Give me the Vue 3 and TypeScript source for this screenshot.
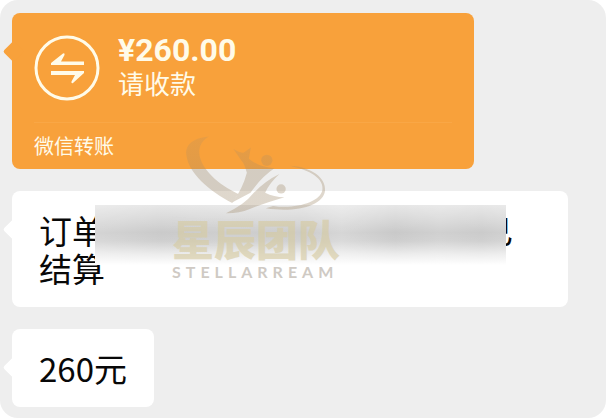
<script setup lang="ts">
const transfer = { amount: '¥260.00', status: '请收款', source: '微信转账' }
const brand = { name: '星辰团队', latin: 'STELLARREAM' }
</script>

<template>
  <main class="chat">
    <section class="bubble transfer">
      <div class="transfer-main">
        <svg class="transfer-icon" viewBox="0 0 66 66" aria-hidden="true">
          <circle cx="33" cy="33" r="31" fill="none" stroke="currentColor" stroke-width="3" />
          <path d="M17 30V28L29 18.500Q31 17.500 30.500 20L27 26.500H50V30Z" fill="currentColor" />
          <path d="M50 36V38L39 48Q37 49 37.500 46.500L41 40H17V36Z" fill="currentColor" />
        </svg>
        <div>
          <div class="amount">{{ transfer.amount }}</div>
          <div class="status">{{ transfer.status }}</div>
        </div>
      </div>
      <footer class="source">{{ transfer.source }}</footer>
    </section>

    <p class="bubble message order"><span class="line">订单<span class="hidden-text"></span>已<span class="mask"></span></span>结算</p>

    <p class="bubble message">260元</p>

    <div class="watermark">
      <svg class="brand-logo" viewBox="105 45 430 240" aria-hidden="true">
        <defs>
          <linearGradient id="logo-fade" gradientUnits="userSpaceOnUse" x1="0" y1="45" x2="0" y2="285">
            <stop offset="0" stop-color="#a08a6a" stop-opacity="0.18" />
            <stop offset="0.4" stop-color="#a08a6a" stop-opacity="0.26" />
            <stop offset="0.44" stop-color="#a08a6a" stop-opacity="0.34" />
            <stop offset="1" stop-color="#a08a6a" stop-opacity="0.34" />
          </linearGradient>
        </defs>
        <g fill="url(#logo-fade)">
          <path d="M178 49C133 52 105 72 109 104C114 158 178 214 247 249L265 222C205 194 151 146 148 99C147 76 158 59 178 49Z" />
          <path d="M250 86Q268 98 281 98L303 82L297 116Q328 142 374 145Q335 171 302 218L248 247Q278 207 291 158Q282 128 276 124Z" />
          <circle cx="351" cy="121" r="17" />
          <path d="M389 162Q360 188 346 218Q372 231 404 232Q346 249 300 267Q265 281 228 280Q284 254 307 224Q343 184 389 162Z" />
          <circle cx="394" cy="207" r="14" />
          <path d="M420 137C485 140 530 174 526 212C521 258 438 279 348 265L370 258C438 268 511 247 518 211C524 177 484 151 420 137Z" />
        </g>
      </svg>
      <div class="brand-name">{{ brand.name }}</div>
      <div class="brand-latin">{{ brand.latin }}</div>
    </div>
  </main>
</template>

<style>
body {
  margin: 0;
  background: #fff;
}
</style>

<style scoped>
.chat {
  position: relative;
  display: flex;
  flex-direction: column;
  align-items: flex-start;
  gap: 22px;
  box-sizing: border-box;
  min-height: 100vh;
  padding: 13px 12px 10px;
  overflow: hidden;
  border-radius: 18px;
  background: #eee;
  font-family: "Noto Sans CJK SC", sans-serif;
}

.bubble {
  position: relative;
  box-sizing: border-box;
  max-width: 100%;
  margin: 0;
  border-radius: 8px;
  background: #fff;
}

.bubble::before {
  content: "";
  position: absolute;
  top: 38px;
  left: -6px;
  width: 15px;
  height: 15px;
  margin-top: -7px;
  border-radius: 2px;
  background: inherit;
  transform: rotate(45deg);
}

.transfer {
  width: 462px;
  padding: 22px 22px 8px;
  background: #f8a13b;
  color: #fffbe9;
}

.transfer-main {
  display: flex;
  gap: 18px;
  height: 87px;
}

.transfer-icon {
  width: 66px;
  height: 66px;
}

.amount {
  font: bold 32px/30px Roboto, sans-serif;
}

.status {
  font-size: 26px;
  line-height: 36px;
}

.source {
  padding-top: 8px;
  border-top: 1px solid #f9a746;
  font-size: 20px;
  line-height: 30px;
}

.message {
  padding: 20px 27px;
  color: #080808;
  font-size: 33px;
  line-height: 38px;
}

.order {
  width: 556px;
}

.line {
  position: relative;
  display: inline-block;
  white-space: nowrap;
}

.hidden-text {
  display: inline-block;
  width: 375px;
}

.mask {
  position: absolute;
  top: -6px;
  left: 56px;
  width: 411px;
  height: 60px;
  background:
    linear-gradient(to bottom, rgb(255 255 255 / 55%), rgb(255 255 255 / 30%) 22%, rgb(255 255 255 / 0%) 46%, rgb(255 255 255 / 10%) 60%, rgb(255 255 255 / 65%) 82%, #fff),
    linear-gradient(to right, #d4d4d4, #cacaca 16%, #cecece 32%, #cccccc 50%, #d6d6d6 60%, #c9c9c9 73%, #d0d0d0 84%, #cbcbcb 94%, #d0d0d0);
}

.watermark {
  position: absolute;
  top: 135px;
  left: 172px;
  pointer-events: none;
}

.brand-logo {
  display: block;
  width: 143px;
  height: 80px;
  margin-left: 13px;
}

.brand-name {
  color: #d6cba3;
  font-size: 42px;
  font-weight: 900;
  line-height: 46px;
  opacity: 0.65;
}

.brand-latin {
  padding-top: 3px;
  color: #cfcac4;
  font: bold 16px/16px Lato, sans-serif;
  letter-spacing: 5px;
}
</style>
